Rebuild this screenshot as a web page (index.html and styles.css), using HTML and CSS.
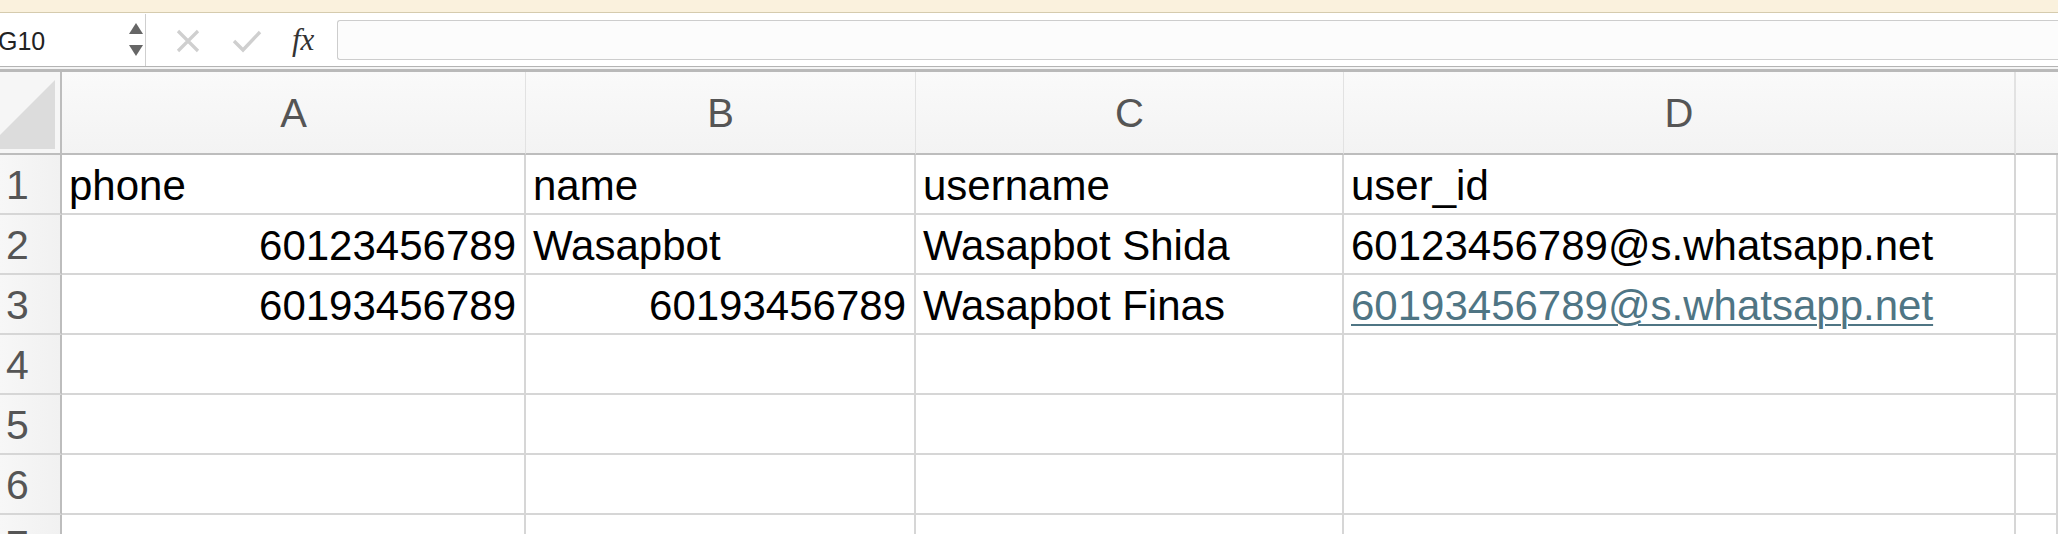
FILE: index.html
```html
<!DOCTYPE html>
<html>
<head>
<meta charset="utf-8">
<link rel="stylesheet" href="styles.css">
</head>
<body>
<div class="topbar"></div>
<div class="formula-row">
  <div class="namebox">
    <span class="name">G10</span>
    <svg class="spinner" width="14" height="36" viewBox="0 0 14 36">
      <polygon points="7,0 14,11 0,11" fill="#666"/>
      <polygon points="0,22 14,22 7,33" fill="#666"/>
    </svg>
  </div>
  <div class="fbtns">
    <svg class="btn-x" width="24" height="24" viewBox="0 0 24 24">
      <path d="M2 2 L22 22 M22 2 L2 22" stroke="#cfcfcf" stroke-width="3.2" fill="none"/>
    </svg>
    <svg class="btn-ok" width="30" height="24" viewBox="0 0 30 24">
      <path d="M2 12 L11 21 L28 3" stroke="#cfcfcf" stroke-width="3.4" fill="none"/>
    </svg>
    <span class="fx">fx</span>
  </div>
  <div class="finput"></div>
</div>
<div class="sep"></div>
<div class="sheet">
  <div class="corner">
    <svg width="60" height="81" viewBox="0 0 60 81"><polygon points="55,8 55,77 -14,77" fill="#dcdcdc"/></svg>
  </div>
  <div class="colhead">A</div>
  <div class="colhead">B</div>
  <div class="colhead">C</div>
  <div class="colhead">D</div>
  <div class="colhead last"></div>

  <div class="rowhead">1</div>
  <div class="cell">phone</div>
  <div class="cell">name</div>
  <div class="cell">username</div>
  <div class="cell">user_id</div>
  <div class="cell"></div>

  <div class="rowhead">2</div>
  <div class="cell num">60123456789</div>
  <div class="cell">Wasapbot</div>
  <div class="cell">Wasapbot Shida</div>
  <div class="cell">60123456789@s.whatsapp.net</div>
  <div class="cell"></div>

  <div class="rowhead">3</div>
  <div class="cell num">60193456789</div>
  <div class="cell num">60193456789</div>
  <div class="cell">Wasapbot Finas</div>
  <div class="cell"><span class="link">60193456789@s.whatsapp.net</span></div>
  <div class="cell"></div>

  <div class="rowhead">4</div>
  <div class="cell"></div><div class="cell"></div><div class="cell"></div><div class="cell"></div><div class="cell"></div>

  <div class="rowhead">5</div>
  <div class="cell"></div><div class="cell"></div><div class="cell"></div><div class="cell"></div><div class="cell"></div>

  <div class="rowhead">6</div>
  <div class="cell"></div><div class="cell"></div><div class="cell"></div><div class="cell"></div><div class="cell"></div>

  <div class="rowhead">7</div>
  <div class="cell"></div><div class="cell"></div><div class="cell"></div><div class="cell"></div><div class="cell"></div>
</div>
</body>
</html>
```

FILE: styles.css
```css
* { box-sizing: border-box; }
html, body {
  margin: 0;
  padding: 0;
  width: 2058px;
  height: 534px;
  overflow: hidden;
  background: #fff;
  font-family: "Liberation Sans", Arial, sans-serif;
}
.topbar {
  height: 13px;
  background: #faf1dd;
  border-bottom: 1px solid #d5cbae;
}
.formula-row {
  height: 53px;
  display: flex;
  align-items: flex-start;
  background: #fff;
}
.namebox {
  width: 146px;
  height: 52px;
  margin-top: 1px;
  border-right: 1px solid #cfcfcf;
  display: flex;
  align-items: center;
  justify-content: space-between;
  padding-right: 2px;
}
.name {
  font-size: 25px;
  color: #222;
  margin-left: -2px;
  margin-top: 2px;
}
.spinner { margin-top: 1px; }
.fbtns {
  width: 191px;
  height: 52px;
  display: flex;
  align-items: center;
  padding-left: 30px;
}
.btn-x { margin-top: 4px; }
.btn-ok { margin-left: 32px; margin-top: 4px; }
.fx {
  margin-left: 30px;
  font-family: "Liberation Serif", "Times New Roman", serif;
  font-style: italic;
  font-size: 31px;
  color: #333;
  margin-top: 2px;
}
.finput {
  flex: 1;
  height: 40px;
  margin-top: 7px;
  background: #fcfcfc;
  border: 1px solid #cdcdcd;
  border-right: none;
  border-radius: 3px 0 0 3px;
}
.sep {
  height: 6px;
  border-top: 1px solid #b4b4b4;
  border-bottom: 3px solid #b9b9b9;
  background: #f4f4f4;
}
.sheet {
  display: grid;
  grid-template-columns: 62px 464px 390px 428px 672px 1fr;
  grid-template-rows: 83px repeat(7, 60px);
}
.corner {
  background: #f6f6f6;
  border-right: 2px solid #bdbdbd;
  border-bottom: 2px solid #bdbdbd;
  overflow: hidden;
}
.corner svg { display: block; }
.colhead {
  background: linear-gradient(#fafafa, #f3f3f3);
  border-right: 1px solid #e2e2e2;
  border-bottom: 2px solid #bdbdbd;
  display: flex;
  align-items: center;
  justify-content: center;
  font-size: 40px;
  color: #555;
  padding-top: 2px;
}
.colhead:nth-child(5) { border-right: 2px solid #e2e2e2; }
.colhead.last { border-right: none; }
.rowhead {
  background: linear-gradient(90deg, #f7f7f7, #f1f1f1);
  border-right: 2px solid #bdbdbd;
  border-bottom: 2px solid #d6d6d6;
  font-size: 41px;
  color: #555;
  line-height: 42px;
  padding-left: 6px;
  display: flex;
  align-items: flex-end;
  padding-bottom: 7px;
}
.cell {
  border-right: 2px solid #d6d6d6;
  border-bottom: 2px solid #d6d6d6;
  font-size: 42px;
  line-height: 42px;
  color: #000;
  padding: 0 8px 6px 7px;
  display: flex;
  align-items: flex-end;
  white-space: nowrap;
  overflow: visible;
}
.cell.num { justify-content: flex-end; }
.link {
  color: #4f7584;
  text-decoration: underline;
  text-decoration-thickness: 2px;
  text-underline-offset: 4px;
}
```
